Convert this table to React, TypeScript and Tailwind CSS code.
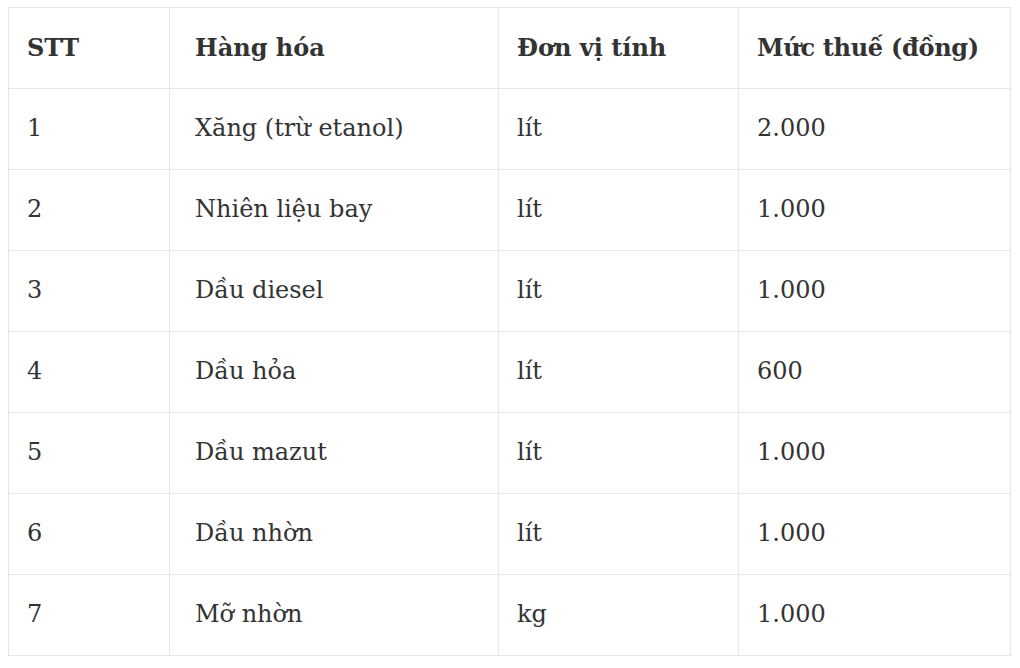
const rows = [
  ["1", "Xăng (trừ etanol)", "lít", "2.000"],
  ["2", "Nhiên liệu bay", "lít", "1.000"],
  ["3", "Dầu diesel", "lít", "1.000"],
  ["4", "Dầu hỏa", "lít", "600"],
  ["5", "Dầu mazut", "lít", "1.000"],
  ["6", "Dầu nhờn", "lít", "1.000"],
  ["7", "Mỡ nhờn", "kg", "1.000"],
];

const cell = "h-[81px] border border-[#e6e6e6] pl-[18px] pr-2 align-middle";

export default function App() {
  return (
    <div className="min-h-screen bg-white pl-2 pt-[7px] font-['DejaVu_Serif',serif] text-[24px] leading-[1.4] text-[#333]">
      <table className="w-[1002px] table-fixed border-collapse">
        <colgroup>
          <col className="w-[161px]" />
          <col className="w-[329px]" />
          <col className="w-[240px]" />
          <col className="w-[272px]" />
        </colgroup>
        <thead>
          <tr className="text-left font-bold">
            <th className={cell}>STT</th>
            <th className={cell + " pl-[25px]"}>Hàng hóa</th>
            <th className={cell}>Đơn vị tính</th>
            <th className={cell + " tracking-[-0.3px]"}>Mức thuế (đồng)</th>
          </tr>
        </thead>
        <tbody>
          {rows.map((r) => (
            <tr key={r[0]}>
              <td className={cell}>{r[0]}</td>
              <td className={cell + " pl-[25px]"}>{r[1]}</td>
              <td className={cell}>{r[2]}</td>
              <td className={cell}>{r[3]}</td>
            </tr>
          ))}
        </tbody>
      </table>
    </div>
  );
}
